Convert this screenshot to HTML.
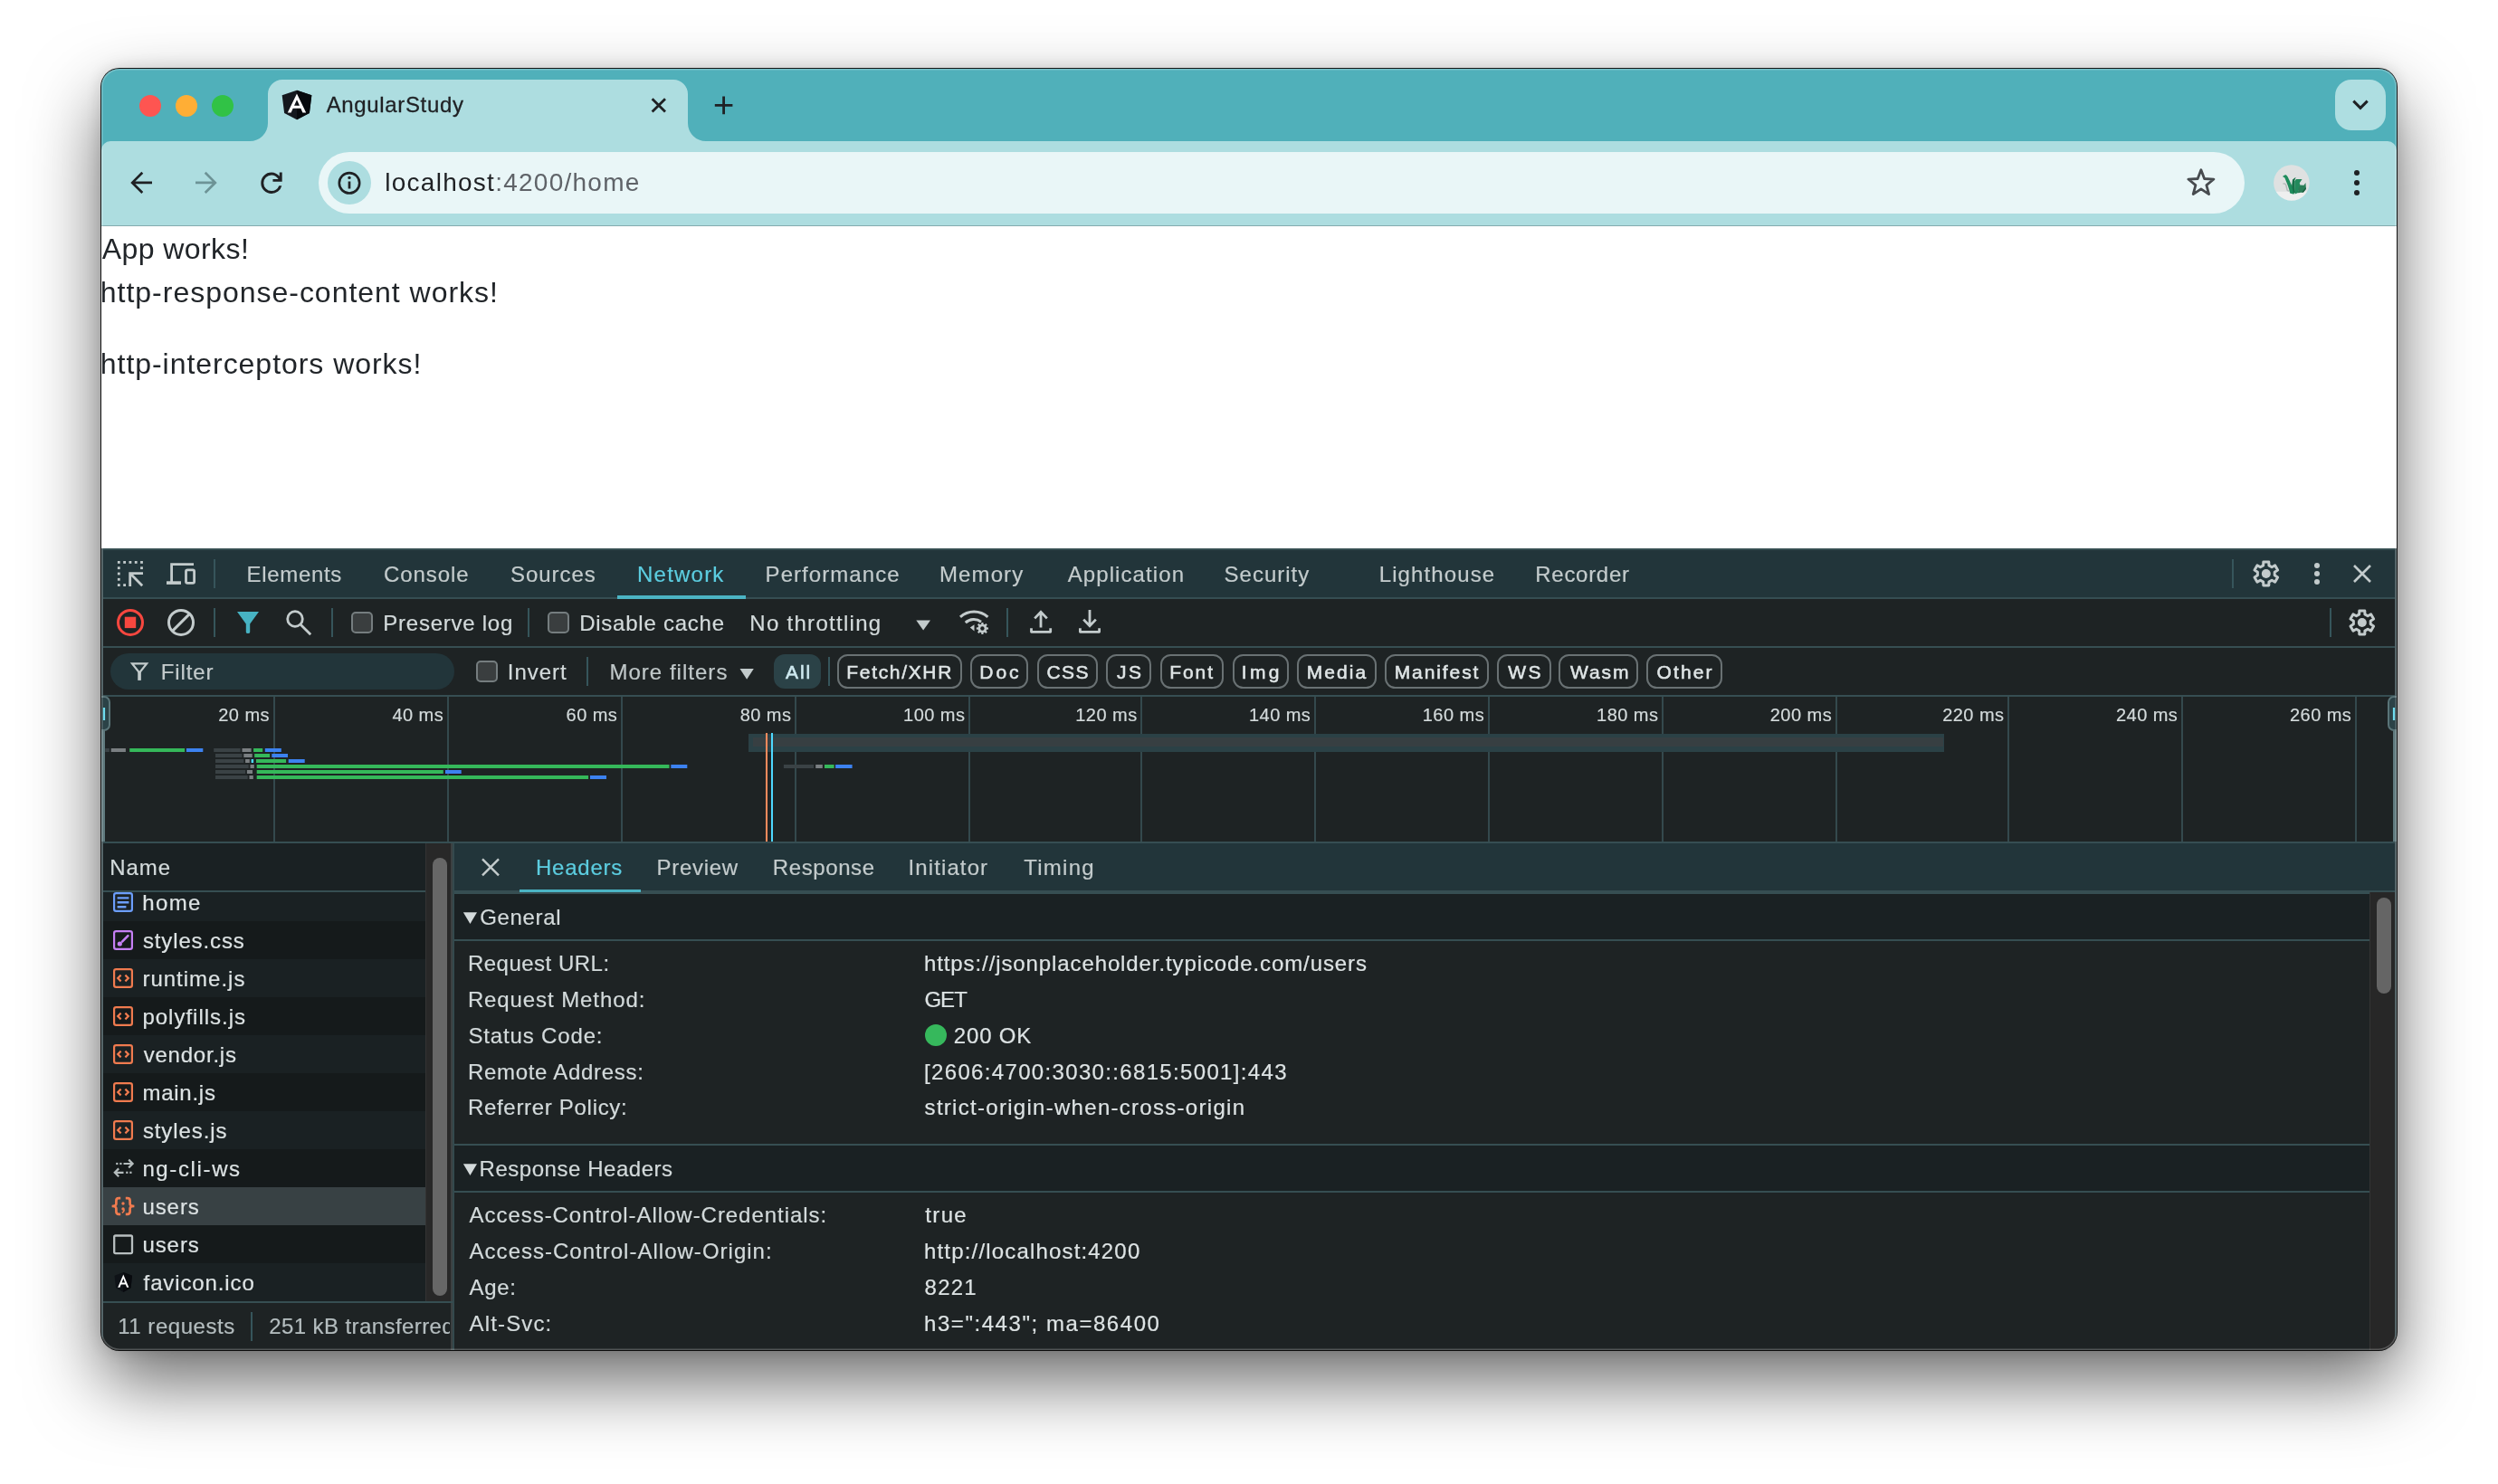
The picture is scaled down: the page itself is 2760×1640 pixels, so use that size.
<!DOCTYPE html>
<html lang="en"><head><meta charset="utf-8"><title>AngularStudy</title>
<style>
html,body{margin:0;padding:0;background:#fff}
body{width:2760px;height:1640px;position:relative;overflow:hidden;font-family:"Liberation Sans",sans-serif}
#sh{position:absolute;left:112px;top:76px;width:2536px;height:1416px;border-radius:20px;box-shadow:0 36px 80px rgba(0,0,0,.58),0 0 18px rgba(0,0,0,.14),0 0 0 1px rgba(0,0,0,.9)}
#win{position:absolute;left:112px;top:76px;width:2536px;height:1416px;border-radius:20px;overflow:hidden;background:#1e2324}
#pg{position:absolute;left:-112px;top:-76px;width:2760px;height:1640px}
#hl{position:absolute;left:0;top:0;width:2536px;height:1416px;border-radius:20px;box-shadow:inset 0 0 0 1.5px rgba(255,255,255,.22);pointer-events:none}
.b{position:absolute}
.t{position:absolute;white-space:pre;line-height:1}
#tx{position:absolute;left:0;top:0;width:2760px;height:1640px;will-change:transform}
svg{position:absolute;left:0;top:0}
</style></head><body>
<div id="sh"></div>
<div id="win"><div id="pg">
<div class="b" style="left:112px;top:76px;width:2536px;height:100px;background:#50b0ba;"></div>
<div class="b" style="left:112px;top:156px;width:2536px;height:93px;background:#addde0;border-radius:10px 10px 0 0;"></div>
<div class="b" style="left:112px;top:249px;width:2536px;height:1px;background:#84abae;"></div>
<div class="b" style="left:352px;top:168px;width:2128px;height:68px;background:#e9f6f7;border-radius:34px;"></div>
<div class="b" style="left:362px;top:178px;width:48px;height:48px;background:#addde0;border-radius:24px;"></div>
<div class="b" style="left:2580px;top:88px;width:56px;height:56px;background:#aedee1;border-radius:18px;"></div>
<div class="b" style="left:154px;top:105px;width:24px;height:24px;background:#fe5551;border-radius:12px;"></div>
<div class="b" style="left:194px;top:105px;width:24px;height:24px;background:#ffae35;border-radius:12px;"></div>
<div class="b" style="left:234px;top:105px;width:24px;height:24px;background:#31c246;border-radius:12px;"></div>
<div class="b" style="left:112px;top:250px;width:2536px;height:356px;background:#ffffff;"></div>
<div class="b" style="left:112px;top:606px;width:2536px;height:886px;background:#1e2324;"></div>
<div class="b" style="left:112px;top:606px;width:2536px;height:2px;background:#364e52;"></div>
<div class="b" style="left:112px;top:608px;width:2536px;height:52px;background:#22353a;"></div>
<div class="b" style="left:112px;top:660px;width:2536px;height:2px;background:#364e52;"></div>
<div class="b" style="left:112px;top:714px;width:2536px;height:2px;background:#364e52;"></div>
<div class="b" style="left:112px;top:768px;width:2536px;height:2px;background:#364e52;"></div>
<div class="b" style="left:682px;top:658px;width:142px;height:4px;background:#4bb4c4;"></div>
<div class="b" style="left:122px;top:722px;width:380px;height:40px;background:#22353a;border-radius:20px;"></div>
<div class="b" style="left:855px;top:723px;width:52.2px;height:38px;background:#2b4247;border-radius:12px;"></div>
<div class="b" style="left:925px;top:723px;width:134.0px;height:34px;border:2px solid #697173;border-radius:11.5px;"></div>
<div class="b" style="left:1071.7px;top:723px;width:60.7px;height:34px;border:2px solid #697173;border-radius:11.5px;"></div>
<div class="b" style="left:1145.7px;top:723px;width:63.8px;height:34px;border:2px solid #697173;border-radius:11.5px;"></div>
<div class="b" style="left:1222.3px;top:723px;width:46.2px;height:34px;border:2px solid #697173;border-radius:11.5px;"></div>
<div class="b" style="left:1281.7px;top:723px;width:66.5px;height:34px;border:2px solid #697173;border-radius:11.5px;"></div>
<div class="b" style="left:1361.9px;top:723px;width:58.5px;height:34px;border:2px solid #697173;border-radius:11.5px;"></div>
<div class="b" style="left:1433.2px;top:723px;width:84.1px;height:34px;border:2px solid #697173;border-radius:11.5px;"></div>
<div class="b" style="left:1530px;top:723px;width:111.4px;height:34px;border:2px solid #697173;border-radius:11.5px;"></div>
<div class="b" style="left:1654.3px;top:723px;width:55.4px;height:34px;border:2px solid #697173;border-radius:11.5px;"></div>
<div class="b" style="left:1722px;top:723px;width:84.0px;height:34px;border:2px solid #697173;border-radius:11.5px;"></div>
<div class="b" style="left:1819.4px;top:723px;width:79.6px;height:34px;border:2px solid #697173;border-radius:11.5px;"></div>
<div class="b" style="left:388px;top:676px;width:20px;height:20px;border:2px solid #757d7f;border-radius:5px;background:#3a3e3f;"></div>
<div class="b" style="left:605px;top:676px;width:20px;height:20px;border:2px solid #757d7f;border-radius:5px;background:#3a3e3f;"></div>
<div class="b" style="left:526px;top:730px;width:20px;height:20px;border:2px solid #757d7f;border-radius:5px;background:#3a3e3f;"></div>
<div class="b" style="left:236px;top:618px;width:2px;height:32px;background:#36555b;"></div>
<div class="b" style="left:236px;top:672px;width:2px;height:32px;background:#36555b;"></div>
<div class="b" style="left:366px;top:672px;width:2px;height:32px;background:#36555b;"></div>
<div class="b" style="left:583px;top:672px;width:2px;height:32px;background:#36555b;"></div>
<div class="b" style="left:1112px;top:672px;width:2px;height:32px;background:#36555b;"></div>
<div class="b" style="left:2466px;top:618px;width:2px;height:32px;background:#36555b;"></div>
<div class="b" style="left:2574px;top:672px;width:2px;height:32px;background:#36555b;"></div>
<div class="b" style="left:648px;top:726px;width:2px;height:32px;background:#36555b;"></div>
<div class="b" style="left:915px;top:726px;width:2px;height:32px;background:#36555b;"></div>
<div class="b" style="left:302px;top:770px;width:2px;height:160px;background:#34494d;"></div>
<div class="b" style="left:494px;top:770px;width:2px;height:160px;background:#34494d;"></div>
<div class="b" style="left:686px;top:770px;width:2px;height:160px;background:#34494d;"></div>
<div class="b" style="left:878px;top:770px;width:2px;height:160px;background:#34494d;"></div>
<div class="b" style="left:1070px;top:770px;width:2px;height:160px;background:#34494d;"></div>
<div class="b" style="left:1260px;top:770px;width:2px;height:160px;background:#34494d;"></div>
<div class="b" style="left:1452px;top:770px;width:2px;height:160px;background:#34494d;"></div>
<div class="b" style="left:1644px;top:770px;width:2px;height:160px;background:#34494d;"></div>
<div class="b" style="left:1836px;top:770px;width:2px;height:160px;background:#34494d;"></div>
<div class="b" style="left:2028px;top:770px;width:2px;height:160px;background:#34494d;"></div>
<div class="b" style="left:2218px;top:770px;width:2px;height:160px;background:#34494d;"></div>
<div class="b" style="left:2410px;top:770px;width:2px;height:160px;background:#34494d;"></div>
<div class="b" style="left:2602px;top:770px;width:2px;height:160px;background:#34494d;"></div>
<div class="b" style="left:827px;top:811px;width:1321px;height:20px;background:#2b4146;"></div>
<div class="b" style="left:831.5px;top:815px;width:1315px;height:10px;background:#373f42;"></div>
<div class="b" style="left:846px;top:810px;width:2px;height:120px;background:#ff8a5c;"></div>
<div class="b" style="left:852px;top:810px;width:2px;height:120px;background:#4dd8ff;"></div>
<div class="b" style="left:112px;top:930px;width:2536px;height:2px;background:#364e52;"></div>
<div class="b" style="left:114px;top:976px;width:356px;height:42px;background:#1a2123;"></div>
<div class="b" style="left:114px;top:1018px;width:356px;height:42px;background:#151a1b;"></div>
<div class="b" style="left:114px;top:1060px;width:356px;height:42px;background:#1a2123;"></div>
<div class="b" style="left:114px;top:1102px;width:356px;height:42px;background:#151a1b;"></div>
<div class="b" style="left:114px;top:1144px;width:356px;height:42px;background:#1a2123;"></div>
<div class="b" style="left:114px;top:1186px;width:356px;height:42px;background:#151a1b;"></div>
<div class="b" style="left:114px;top:1228px;width:356px;height:42px;background:#1a2123;"></div>
<div class="b" style="left:114px;top:1270px;width:356px;height:42px;background:#151a1b;"></div>
<div class="b" style="left:114px;top:1312px;width:356px;height:42px;background:#384144;"></div>
<div class="b" style="left:114px;top:1354px;width:356px;height:42px;background:#151a1b;"></div>
<div class="b" style="left:114px;top:1396px;width:356px;height:42px;background:#1a2123;"></div>
<div class="b" style="left:114px;top:932px;width:356px;height:52px;background:#1a2123;"></div>
<div class="b" style="left:114px;top:984px;width:356px;height:2px;background:#364e52;"></div>
<div class="b" style="left:470px;top:932px;width:28px;height:506px;background:#282828;border-left:1.5px solid #333;box-sizing:border-box;"></div>
<div class="b" style="left:478px;top:948px;width:16px;height:484px;background:#676767;border-radius:8px;"></div>
<div class="b" style="left:498px;top:932px;width:2px;height:560px;background:#3c4142;"></div>
<div class="b" style="left:500px;top:932px;width:2px;height:560px;background:#34494d;"></div>
<div class="b" style="left:112px;top:1438px;width:388px;height:2px;background:#364e52;"></div>
<div class="b" style="left:277px;top:1450px;width:2px;height:32px;background:#36555b;"></div>
<div class="b" style="left:502px;top:932px;width:2146px;height:52px;background:#22353a;"></div>
<div class="b" style="left:502px;top:984px;width:2146px;height:4px;background:#364e52;"></div>
<div class="b" style="left:574px;top:982.7px;width:134px;height:3.3px;background:#4bb4c4;"></div>
<div class="b" style="left:502px;top:988px;width:2116px;height:50px;background:#1a2123;"></div>
<div class="b" style="left:502px;top:1038px;width:2116px;height:2px;background:#364e52;"></div>
<div class="b" style="left:502px;top:1264px;width:2116px;height:2px;background:#364e52;"></div>
<div class="b" style="left:502px;top:1266px;width:2116px;height:50px;background:#1a2123;"></div>
<div class="b" style="left:502px;top:1316px;width:2116px;height:2px;background:#364e52;"></div>
<div class="b" style="left:2618px;top:986px;width:28px;height:506px;background:#272727;border-left:1px solid #343434;box-sizing:border-box;"></div>
<div class="b" style="left:2626px;top:992px;width:16px;height:106px;background:#656565;border-radius:8px;"></div>
<div class="b" style="left:1022px;top:1132px;width:24px;height:24px;background:#36b85c;border-radius:12px;"></div>
<div class="b" style="left:112px;top:606px;width:2px;height:886px;background:#3a4d51;"></div>
<div class="b" style="left:2646px;top:606px;width:2px;height:886px;background:#3a4d51;"></div>
<svg width="2760" height="1640" viewBox="0 0 2760 1640"><path d="M276,156 A20,20 0 0 0 296,136 L296,104 A16,16 0 0 1 312,88 L744,88 A16,16 0 0 1 760,104 L760,136 A20,20 0 0 0 780,156 Z" fill="#addde0"/>
<g transform="translate(306.05,95.00) scale(0.1756,0.1615)"><path d="M125 30L31.9 63.2l14.2 123.1L125 230l78.9-43.7 14.2-123.1z" fill="#14181e"/><path d="M125 30V230l78.9-43.7 14.2-123.1L125 30z" fill="#07090d"/><path d="M125 52.1L66.8 182.6h21.7l11.7-29.2h49.4l11.7 29.2H183L125 52.1zm17 83.3h-34l17-40.9 17 40.9z" fill="#fff"/></g>
<path d="M720.6,109.2 L735,123.6 M735,109.2 L720.6,123.6" stroke="#1f2124" stroke-width="2.8" fill="none"/>
<path d="M789.8,116.4 H809.4 M799.6,106.6 V126.2" stroke="#1f2124" stroke-width="2.8" fill="none"/>
<path d="M2600.3,111.6 L2608,119.3 L2615.7,111.6" stroke="#1f2124" stroke-width="3" fill="none"/>
<path d="M168,201.9 H146.5 M157.3,190.8 L146.2,201.9 L157.3,213" stroke="#1f2124" stroke-width="2.7" fill="none"/>
<path d="M216,201.9 H237.5 M226.7,190.8 L237.8,201.9 L226.7,213" stroke="#6d9396" stroke-width="2.7" fill="none"/>
<g transform="translate(300,202.3) scale(1.46) translate(-12,-12)"><path d="M12 20q-3.35 0-5.675-2.325Q4 15.35 4 12q0-3.35 2.325-5.675Q8.65 4 12 4q1.725 0 3.3.712 1.575.713 2.7 2.038V4h2v7h-7V9h4.2q-.8-1.4-2.187-2.2Q13.625 6 12 6 9.5 6 7.75 7.75T6 12q0 2.5 1.75 4.25T12 18q1.925 0 3.475-1.1T17.65 14h2.1q-.7 2.65-2.85 4.325Q14.75 20 12 20Z" fill="#1f2124"/></g>
<circle cx="386" cy="202.3" r="11.2" stroke="#1f2124" stroke-width="2.6" fill="none"/><path d="M386,200.4 V208.4" stroke="#1f2124" stroke-width="2.7"/><circle cx="386" cy="196.4" r="1.7" fill="#1f2124"/>
<polygon points="2431.90,187.80 2435.60,197.50 2445.98,198.03 2437.89,204.55 2440.60,214.57 2431.90,208.90 2423.20,214.57 2425.91,204.55 2417.82,198.03 2428.20,197.50" fill="none" stroke="#474b4f" stroke-width="2.8" stroke-linejoin="round"/>
<defs><clipPath id="avc"><circle cx="2531.9" cy="202" r="19.8"/></clipPath></defs>
<g clip-path="url(#avc)"><rect x="2510" y="180" width="44" height="32" fill="#dfe1e1"/><rect x="2510" y="211.8" width="44" height="12" fill="#eeefef"/><g transform="translate(2500,170) scale(0.043122)"><path d="M520,768 Q580,745 602,815 L628,930 L668,958" stroke="#b3b8b8" stroke-width="34" fill="none"/><path d="M510,578 L560,545 L600,542 L640,585 L690,690 L740,800 L790,900 L800,1035 L740,1020 L700,1010 L680,920 L640,800 L600,700 L565,615 Z" fill="#1e8c5c"/><path d="M745,820 L765,660 L850,600 L815,690 L835,1000 L790,1020 Z" fill="#167048"/><path d="M815,700 L860,650 L1010,650 L945,745 L962,800 L905,1000 L830,1032 Z" fill="#23895c"/><path d="M925,860 L962,800 L1055,806 L1100,740 L1112,900 L1045,988 L900,1002 Z" fill="#2b7d57"/><path d="M1000,990 L1045,988 L1112,900 L1100,860 Z" fill="#1c5c3f"/></g></g>
<circle cx="2604" cy="191" r="3" fill="#1f2124"/>
<circle cx="2604" cy="202" r="3" fill="#1f2124"/>
<circle cx="2604" cy="213" r="3" fill="#1f2124"/>
<rect x="129.9" y="620.0" width="2.8" height="2.8" fill="#c3cbcc"/>
<rect x="136.2" y="620.0" width="2.8" height="2.8" fill="#c3cbcc"/>
<rect x="129.9" y="626.3" width="2.8" height="2.8" fill="#c3cbcc"/>
<rect x="142.5" y="620.0" width="2.8" height="2.8" fill="#c3cbcc"/>
<rect x="129.9" y="632.6" width="2.8" height="2.8" fill="#c3cbcc"/>
<rect x="148.8" y="620.0" width="2.8" height="2.8" fill="#c3cbcc"/>
<rect x="129.9" y="638.9" width="2.8" height="2.8" fill="#c3cbcc"/>
<rect x="155.1" y="620.0" width="2.8" height="2.8" fill="#c3cbcc"/>
<rect x="129.9" y="645.2" width="2.8" height="2.8" fill="#c3cbcc"/>
<rect x="155.1" y="626.3" width="2.8" height="2.8" fill="#c3cbcc"/>
<rect x="136.2" y="645.2" width="2.8" height="2.8" fill="#c3cbcc"/>
<path d="M158,633.7 H143.7 V648 M144.6,634.6 L157.2,647.2" stroke="#c3cbcc" stroke-width="2.8" fill="none"/>
<path d="M214,623.7 H189.6 V643.9 M184,644.1 H200" stroke="#c3cbcc" stroke-width="2.8" fill="none"/><path d="M184,644.1 H200" stroke="#c3cbcc" stroke-width="3.4"/>
<rect x="205.5" y="629.8" width="9.1" height="14.6" rx="1.6" stroke="#c3cbcc" stroke-width="2.8" fill="none"/>
<path d="M2500.67,624.92 L2500.79,620.94 L2506.81,620.94 L2506.93,624.92 L2510.10,626.75 L2513.60,624.86 L2516.61,630.08 L2513.22,632.17 L2513.22,635.83 L2516.61,637.92 L2513.60,643.14 L2510.10,641.25 L2506.93,643.08 L2506.81,647.06 L2500.79,647.06 L2500.67,643.08 L2497.50,641.25 L2494.00,643.14 L2490.99,637.92 L2494.38,635.83 L2494.38,632.17 L2490.99,630.08 L2494.00,624.86 L2497.50,626.75Z" fill="none" stroke="#c3cbcc" stroke-width="3" stroke-linejoin="round"/><circle cx="2503.8" cy="634" r="5" fill="#c3cbcc"/>
<circle cx="2560" cy="625" r="3" fill="#c3cbcc"/>
<circle cx="2560" cy="634" r="3" fill="#c3cbcc"/>
<circle cx="2560" cy="643" r="3" fill="#c3cbcc"/>
<path d="M2601,625 L2619,643 M2619,625 L2601,643" stroke="#c3cbcc" stroke-width="2.6" fill="none"/>
<circle cx="144" cy="687.9" r="13.5" stroke="#f7473f" stroke-width="3" fill="none"/><rect x="137.8" y="681.7" width="12.4" height="12.4" fill="#f7473f"/>
<circle cx="200" cy="687.9" r="13.5" stroke="#c3cbcc" stroke-width="3" fill="none"/><path d="M190.5,697.4 L209.5,678.4" stroke="#c3cbcc" stroke-width="3"/>
<path d="M262,676 H286 L276.2,689.5 V698.5 Q276.2,700 274,700 Q271.8,700 271.8,698.5 V689.5 Z" fill="#47b3c3"/>
<circle cx="326" cy="684" r="8.3" stroke="#c3cbcc" stroke-width="2.8" fill="none"/><path d="M332.4,690.6 L343.2,701.2" stroke="#c3cbcc" stroke-width="2.8"/>
<path d="M1012.3,685.6 H1028 L1020.15,696.6 Z" fill="#c3cbcc"/>
<path d="M1061,681.8 A22.5,22.5 0 0 1 1091.4,681.8" stroke="#c3cbcc" stroke-width="3" fill="none"/><path d="M1066.8,688.2 A13.5,13.5 0 0 1 1084,687.2" stroke="#c3cbcc" stroke-width="3" fill="none"/><path d="M1076.5,690.2 L1076.5,697.5 L1071.8,693.5 Z" fill="#c3cbcc"/>
<polygon points="1090.15,693.31 1092.02,693.45 1092.02,695.55 1090.15,695.69 1089.60,697.02 1090.82,698.44 1089.34,699.92 1087.92,698.70 1086.59,699.25 1086.45,701.12 1084.35,701.12 1084.21,699.25 1082.88,698.70 1081.46,699.92 1079.98,698.44 1081.20,697.02 1080.65,695.69 1078.78,695.55 1078.78,693.45 1080.65,693.31 1081.20,691.98 1079.98,690.56 1081.46,689.08 1082.88,690.30 1084.21,689.75 1084.35,687.88 1086.45,687.88 1086.59,689.75 1087.92,690.30 1089.34,689.08 1090.82,690.56 1089.60,691.98" fill="#c3cbcc"/><circle cx="1085.4" cy="694.5" r="2.2" fill="#1e2324"/>
<path d="M1150,693.6 V676.5 M1143.2,683.4 L1150,676.3 L1156.8,683.4" stroke="#c3cbcc" stroke-width="2.8" fill="none"/><path d="M1139.5,694.2 V698.3 H1160.7 V694.2" stroke="#c3cbcc" stroke-width="2.8" fill="none" stroke-linejoin="round"/>
<path d="M1204,674 V691.4 M1197.2,684.6 L1204,691.7 L1210.8,684.6" stroke="#c3cbcc" stroke-width="2.8" fill="none"/><path d="M1193.4,694.2 V698.3 H1214.6 V694.2" stroke="#c3cbcc" stroke-width="2.8" fill="none" stroke-linejoin="round"/>
<path d="M2606.67,678.92 L2606.79,674.94 L2612.81,674.94 L2612.93,678.92 L2616.10,680.75 L2619.60,678.86 L2622.61,684.08 L2619.22,686.17 L2619.22,689.83 L2622.61,691.92 L2619.60,697.14 L2616.10,695.25 L2612.93,697.08 L2612.81,701.06 L2606.79,701.06 L2606.67,697.08 L2603.50,695.25 L2600.00,697.14 L2596.99,691.92 L2600.38,689.83 L2600.38,686.17 L2596.99,684.08 L2600.00,678.86 L2603.50,680.75Z" fill="none" stroke="#c3cbcc" stroke-width="3" stroke-linejoin="round"/><circle cx="2609.8" cy="688" r="5" fill="#c3cbcc"/>
<path d="M146,733.4 H162.1 L154.05,743.4 Z" stroke="#c3cbcc" stroke-width="2.2" fill="none" stroke-linejoin="miter"/><rect x="152.25" y="742" width="3.6" height="9.9" fill="#c3cbcc"/>
<path d="M817.5,739 H832.8 L825.15,750.8 Z" fill="#c3cbcc"/>
<rect x="112" y="770" width="4" height="160" fill="#5f797d"/><rect x="2644" y="770" width="4" height="160" fill="#5f797d"/>
<rect x="103" y="770" width="18" height="37" rx="6" fill="#2b4247" stroke="#5a7478" stroke-width="2"/><rect x="113.9" y="782" width="2.2" height="14" fill="#6fddf0"/>
<rect x="2639" y="770" width="18" height="37" rx="6" fill="#2b4247" stroke="#5a7478" stroke-width="2"/><rect x="2643.9" y="782" width="2.2" height="14" fill="#6fddf0"/>
<rect x="116.2" y="827" width="4.7" height="4" fill="#3a4245"/>
<rect x="122.7" y="827" width="16.2" height="4" fill="#7a7f82"/>
<rect x="143.2" y="827" width="60.9" height="4" fill="#35b85a"/>
<rect x="205.9" y="827" width="18.4" height="4" fill="#3c82f0"/>
<rect x="236.2" y="827" width="29.5" height="4" fill="#3a4245"/>
<rect x="267.5" y="827" width="10.1" height="4" fill="#7a7f82"/>
<rect x="280.1" y="827" width="10.1" height="4" fill="#35b85a"/>
<rect x="292.8" y="827" width="18.0" height="4" fill="#3c82f0"/>
<rect x="238.0" y="833" width="29.5" height="4" fill="#3a4245"/>
<rect x="269.3" y="833" width="9.4" height="4" fill="#7a7f82"/>
<rect x="281.2" y="833" width="16.9" height="4" fill="#35b85a"/>
<rect x="300.3" y="833" width="17.7" height="4" fill="#3c82f0"/>
<rect x="238.0" y="839" width="31.3" height="4" fill="#3a4245"/>
<rect x="271.1" y="839" width="4.7" height="4" fill="#7a7f82"/>
<rect x="277.6" y="839" width="2.5" height="4" fill="#4dd8ff"/>
<rect x="283.0" y="839" width="33.1" height="4" fill="#35b85a"/>
<rect x="318.7" y="839" width="18.0" height="4" fill="#3c82f0"/>
<rect x="238.0" y="845" width="36.7" height="4" fill="#3a4245"/>
<rect x="276.5" y="845" width="4.3" height="4" fill="#7a7f82"/>
<rect x="283.7" y="845" width="455.8" height="4" fill="#35b85a"/>
<rect x="741.3" y="845" width="18.0" height="4" fill="#3c82f0"/>
<rect x="238.0" y="851" width="33.1" height="4" fill="#3a4245"/>
<rect x="272.9" y="851" width="6.1" height="4" fill="#7a7f82"/>
<rect x="283.7" y="851" width="206.1" height="4" fill="#35b85a"/>
<rect x="492.0" y="851" width="17.7" height="4" fill="#3c82f0"/>
<rect x="238.0" y="857" width="35.7" height="4" fill="#3a4245"/>
<rect x="275.5" y="857" width="4.3" height="4" fill="#7a7f82"/>
<rect x="283.7" y="857" width="366.4" height="4" fill="#35b85a"/>
<rect x="652.0" y="857" width="18.0" height="4" fill="#3c82f0"/>
<rect x="865.9" y="845" width="33.1" height="4" fill="#3a4245"/>
<rect x="901.2" y="845" width="7.6" height="4" fill="#7a7f82"/>
<rect x="911" y="845" width="10.6" height="4" fill="#35b85a"/>
<rect x="923.1" y="845" width="18.5" height="4" fill="#3c82f0"/>
<rect x="126.1" y="987.1" width="19.8" height="19.8" rx="2.2" stroke="#6c9efb" stroke-width="2.2" fill="none"/><path d="M129.6,992.4 H142.4 M129.6,997.3 H142.4 M129.6,1002.2 H139.4" stroke="#6c9efb" stroke-width="2.4"/>
<rect x="126.1" y="1029.1" width="19.8" height="19.8" rx="2.2" stroke="#c680f5" stroke-width="2.2" fill="none"/><path d="M141.4,1034.2 L135,1040.6" stroke="#c680f5" stroke-width="2.6" stroke-linecap="round"/><circle cx="132.3" cy="1043" r="2.6" fill="#c680f5"/>
<rect x="126.1" y="1071.1" width="19.8" height="19.8" rx="2.2" stroke="#f07b4f" stroke-width="2.2" fill="none"/><path d="M133.6,1077.6 L130.2,1081 L133.6,1084.4 M138.4,1077.6 L141.8,1081 L138.4,1084.4" stroke="#f07b4f" stroke-width="2.2" fill="none"/>
<rect x="126.1" y="1113.1" width="19.8" height="19.8" rx="2.2" stroke="#f07b4f" stroke-width="2.2" fill="none"/><path d="M133.6,1119.6 L130.2,1123 L133.6,1126.4 M138.4,1119.6 L141.8,1123 L138.4,1126.4" stroke="#f07b4f" stroke-width="2.2" fill="none"/>
<rect x="126.1" y="1155.1" width="19.8" height="19.8" rx="2.2" stroke="#f07b4f" stroke-width="2.2" fill="none"/><path d="M133.6,1161.6 L130.2,1165 L133.6,1168.4 M138.4,1161.6 L141.8,1165 L138.4,1168.4" stroke="#f07b4f" stroke-width="2.2" fill="none"/>
<rect x="126.1" y="1197.1" width="19.8" height="19.8" rx="2.2" stroke="#f07b4f" stroke-width="2.2" fill="none"/><path d="M133.6,1203.6 L130.2,1207 L133.6,1210.4 M138.4,1203.6 L141.8,1207 L138.4,1210.4" stroke="#f07b4f" stroke-width="2.2" fill="none"/>
<rect x="126.1" y="1239.1" width="19.8" height="19.8" rx="2.2" stroke="#f07b4f" stroke-width="2.2" fill="none"/><path d="M133.6,1245.6 L130.2,1249 L133.6,1252.4 M138.4,1245.6 L141.8,1249 L138.4,1252.4" stroke="#f07b4f" stroke-width="2.2" fill="none"/>
<path d="M136.5,1286 H146 M142.2,1281.6 L146.6,1286 L142.2,1290.4" stroke="#b4bcbd" stroke-width="2.2" fill="none"/><rect x="128.2" y="1284.9" width="2.2" height="2.2" fill="#b4bcbd"/><rect x="132.3" y="1284.9" width="2.2" height="2.2" fill="#b4bcbd"/>
<path d="M136.5,1295.8 H127.4 M131.2,1291.4 L126.8,1295.8 L131.2,1300.2" stroke="#b4bcbd" stroke-width="2.2" fill="none"/><rect x="139.2" y="1294.7" width="2.2" height="2.2" fill="#b4bcbd"/><rect x="143.3" y="1294.7" width="2.2" height="2.2" fill="#b4bcbd"/>
<path d="M133.2,1324.2 H131.2 Q128.4,1324.2 128.4,1327 V1330.2 Q128.4,1333 123.6,1333 Q128.4,1333 128.4,1335.8 V1339 Q128.4,1341.8 131.2,1341.8 H133.2" stroke="#f07b4f" stroke-width="2.7" fill="none"/>
<path d="M138.8,1324.2 H140.8 Q143.6,1324.2 143.6,1327 V1330.2 Q143.6,1333 148.4,1333 Q143.6,1333 143.6,1335.8 V1339 Q143.6,1341.8 140.8,1341.8 H138.8" stroke="#f07b4f" stroke-width="2.7" fill="none"/>
<circle cx="136" cy="1330" r="1.7" fill="#f07b4f"/><circle cx="136" cy="1336" r="1.7" fill="#f07b4f"/><path d="M137.2,1336.4 q0,2.8 -2.4,3.8" stroke="#f07b4f" stroke-width="1.5" fill="none"/>
<rect x="126.2" y="1365.5" width="19.8" height="19.6" rx="1.5" stroke="#b8bfc0" stroke-width="2.3" fill="none"/>
<g transform="translate(123.21,1402.70) scale(0.1047,0.1100)"><path d="M125 30L31.9 63.2l14.2 123.1L125 230l78.9-43.7 14.2-123.1z" fill="#0e1217"/><path d="M125 30V230l78.9-43.7 14.2-123.1L125 30z" fill="#080a0e"/><path d="M125 52.1L66.8 182.6h21.7l11.7-29.2h49.4l11.7 29.2H183L125 52.1zm17 83.3h-34l17-40.9 17 40.9z" fill="#fff"/></g>
<path d="M533,949.4 L551,967.4 M551,949.4 L533,967.4" stroke="#c3cbcc" stroke-width="2.4" fill="none"/>
<path d="M511.9,1008.2 H527 L519.45,1021 Z" fill="#d3dadb"/>
<path d="M511.9,1286.3 H527 L519.45,1299.1 Z" fill="#d3dadb"/></svg>
<div id="tx">
<div class="t" style="top:103.8px;font-size:24px;color:#1f2124;letter-spacing:0.647px;left:360.7px;-webkit-text-stroke:0.3px #1f2124;">AngularStudy</div>
<div class="t" style="left:425.3px;top:188.2px;font-size:28px;color:#1f2124;letter-spacing:1.256px">localhost<span style="color:#5f6368">:4200/home</span></div>
<div class="t" style="top:258.5px;font-size:32px;color:#212529;letter-spacing:0.425px;left:112.7px;">App works!</div>
<div class="t" style="top:306.6px;font-size:32px;color:#212529;letter-spacing:0.983px;left:110.8px;">http-response-content works!</div>
<div class="t" style="top:386.3px;font-size:32px;color:#212529;letter-spacing:0.958px;left:110.8px;">http-interceptors works!</div>
<div class="t" style="top:622.5px;font-size:24px;color:#c3cbcc;letter-spacing:0.686px;left:272.5px;-webkit-text-stroke:0.2px #c3cbcc;">Elements</div>
<div class="t" style="top:622.5px;font-size:24px;color:#c3cbcc;letter-spacing:0.911px;left:424.0px;-webkit-text-stroke:0.2px #c3cbcc;">Console</div>
<div class="t" style="top:622.5px;font-size:24px;color:#c3cbcc;letter-spacing:0.924px;left:564.1px;-webkit-text-stroke:0.2px #c3cbcc;">Sources</div>
<div class="t" style="top:622.5px;font-size:24px;color:#5ccde0;letter-spacing:1.224px;left:704.0px;-webkit-text-stroke:0.2px #5ccde0;">Network</div>
<div class="t" style="top:622.5px;font-size:24px;color:#c3cbcc;letter-spacing:1.055px;left:845.6px;-webkit-text-stroke:0.2px #c3cbcc;">Performance</div>
<div class="t" style="top:622.5px;font-size:24px;color:#c3cbcc;letter-spacing:1.099px;left:1038.0px;-webkit-text-stroke:0.2px #c3cbcc;">Memory</div>
<div class="t" style="top:622.5px;font-size:24px;color:#c3cbcc;letter-spacing:1.089px;left:1179.7px;-webkit-text-stroke:0.2px #c3cbcc;">Application</div>
<div class="t" style="top:622.5px;font-size:24px;color:#c3cbcc;letter-spacing:0.991px;left:1352.6px;-webkit-text-stroke:0.2px #c3cbcc;">Security</div>
<div class="t" style="top:622.5px;font-size:24px;color:#c3cbcc;letter-spacing:1.116px;left:1523.7px;-webkit-text-stroke:0.2px #c3cbcc;">Lighthouse</div>
<div class="t" style="top:622.5px;font-size:24px;color:#c3cbcc;letter-spacing:0.708px;left:1696.3px;-webkit-text-stroke:0.2px #c3cbcc;">Recorder</div>
<div class="t" style="top:676.5px;font-size:24px;color:#d3dadb;letter-spacing:0.749px;left:423.3px;-webkit-text-stroke:0.2px #d3dadb;">Preserve log</div>
<div class="t" style="top:676.5px;font-size:24px;color:#d3dadb;letter-spacing:0.756px;left:640.2px;-webkit-text-stroke:0.2px #d3dadb;">Disable cache</div>
<div class="t" style="top:676.5px;font-size:24px;color:#d3dadb;letter-spacing:1.288px;left:828.3px;-webkit-text-stroke:0.2px #d3dadb;">No throttling</div>
<div class="t" style="top:730.8px;font-size:24px;color:#c3cbcc;letter-spacing:0.875px;left:177.7px;-webkit-text-stroke:0.2px #c3cbcc;">Filter</div>
<div class="t" style="top:730.8px;font-size:24px;color:#d3dadb;letter-spacing:0.987px;left:560.8px;-webkit-text-stroke:0.2px #d3dadb;">Invert</div>
<div class="t" style="top:730.8px;font-size:24px;color:#c0c8c9;letter-spacing:1.028px;left:673.4px;-webkit-text-stroke:0.2px #c0c8c9;">More filters</div>
<div class="t" style="top:731.9px;font-size:21px;color:#cfeaf0;letter-spacing:1.887px;left:868.0px;-webkit-text-stroke:0.55px #cfeaf0;">All</div>
<div class="t" style="top:731.9px;font-size:21px;color:#dfe5e6;letter-spacing:1.671px;left:935.3px;-webkit-text-stroke:0.55px #dfe5e6;">Fetch/XHR</div>
<div class="t" style="top:731.9px;font-size:21px;color:#dfe5e6;letter-spacing:2.917px;left:1082.3px;-webkit-text-stroke:0.55px #dfe5e6;">Doc</div>
<div class="t" style="top:731.9px;font-size:21px;color:#dfe5e6;letter-spacing:1.445px;left:1156.5px;-webkit-text-stroke:0.55px #dfe5e6;">CSS</div>
<div class="t" style="top:731.9px;font-size:21px;color:#dfe5e6;letter-spacing:2.494px;left:1234.0px;-webkit-text-stroke:0.55px #dfe5e6;">JS</div>
<div class="t" style="top:731.9px;font-size:21px;color:#dfe5e6;letter-spacing:1.907px;left:1292.3px;-webkit-text-stroke:0.55px #dfe5e6;">Font</div>
<div class="t" style="top:731.9px;font-size:21px;color:#dfe5e6;letter-spacing:3.335px;left:1371.8px;-webkit-text-stroke:0.55px #dfe5e6;">Img</div>
<div class="t" style="top:731.9px;font-size:21px;color:#dfe5e6;letter-spacing:2.070px;left:1443.8px;-webkit-text-stroke:0.55px #dfe5e6;">Media</div>
<div class="t" style="top:731.9px;font-size:21px;color:#dfe5e6;letter-spacing:1.903px;left:1540.7px;-webkit-text-stroke:0.55px #dfe5e6;">Manifest</div>
<div class="t" style="top:731.9px;font-size:21px;color:#dfe5e6;letter-spacing:2.341px;left:1666.3px;-webkit-text-stroke:0.55px #dfe5e6;">WS</div>
<div class="t" style="top:731.9px;font-size:21px;color:#dfe5e6;letter-spacing:1.937px;left:1735.0px;-webkit-text-stroke:0.55px #dfe5e6;">Wasm</div>
<div class="t" style="top:731.9px;font-size:21px;color:#dfe5e6;letter-spacing:2.099px;left:1830.6px;-webkit-text-stroke:0.55px #dfe5e6;">Other</div>
<div class="t" style="top:780.1px;font-size:20px;color:#d3dadb;letter-spacing:0.450px;left:241.3px;-webkit-text-stroke:0.2px #d3dadb;">20 ms</div>
<div class="t" style="top:780.1px;font-size:20px;color:#d3dadb;letter-spacing:0.450px;left:433.4px;-webkit-text-stroke:0.2px #d3dadb;">40 ms</div>
<div class="t" style="top:780.1px;font-size:20px;color:#d3dadb;letter-spacing:0.450px;left:625.6px;-webkit-text-stroke:0.2px #d3dadb;">60 ms</div>
<div class="t" style="top:780.1px;font-size:20px;color:#d3dadb;letter-spacing:0.450px;left:817.7px;-webkit-text-stroke:0.2px #d3dadb;">80 ms</div>
<div class="t" style="top:780.1px;font-size:20px;color:#d3dadb;letter-spacing:0.450px;left:998.1px;-webkit-text-stroke:0.2px #d3dadb;">100 ms</div>
<div class="t" style="top:780.1px;font-size:20px;color:#d3dadb;letter-spacing:0.450px;left:1188.3px;-webkit-text-stroke:0.2px #d3dadb;">120 ms</div>
<div class="t" style="top:780.1px;font-size:20px;color:#d3dadb;letter-spacing:0.450px;left:1380.0px;-webkit-text-stroke:0.2px #d3dadb;">140 ms</div>
<div class="t" style="top:780.1px;font-size:20px;color:#d3dadb;letter-spacing:0.450px;left:1571.8px;-webkit-text-stroke:0.2px #d3dadb;">160 ms</div>
<div class="t" style="top:780.1px;font-size:20px;color:#d3dadb;letter-spacing:0.450px;left:1764.1px;-webkit-text-stroke:0.2px #d3dadb;">180 ms</div>
<div class="t" style="top:780.1px;font-size:20px;color:#d3dadb;letter-spacing:0.450px;left:1955.8px;-webkit-text-stroke:0.2px #d3dadb;">200 ms</div>
<div class="t" style="top:780.1px;font-size:20px;color:#d3dadb;letter-spacing:0.450px;left:2146.2px;-webkit-text-stroke:0.2px #d3dadb;">220 ms</div>
<div class="t" style="top:780.1px;font-size:20px;color:#d3dadb;letter-spacing:0.450px;left:2338.0px;-webkit-text-stroke:0.2px #d3dadb;">240 ms</div>
<div class="t" style="top:780.1px;font-size:20px;color:#d3dadb;letter-spacing:0.450px;left:2530.0px;-webkit-text-stroke:0.2px #d3dadb;">260 ms</div>
<div class="t" style="top:946.9px;font-size:24px;color:#d3dadb;letter-spacing:0.933px;left:121.2px;-webkit-text-stroke:0.2px #d3dadb;">Name</div>
<div class="t" style="top:985.7px;font-size:24px;color:#dde3e4;letter-spacing:1.325px;left:157.3px;-webkit-text-stroke:0.2px #dde3e4;">home</div>
<div class="t" style="top:1027.7px;font-size:24px;color:#dde3e4;letter-spacing:0.872px;left:157.9px;-webkit-text-stroke:0.2px #dde3e4;">styles.css</div>
<div class="t" style="top:1069.7px;font-size:24px;color:#dde3e4;letter-spacing:1.002px;left:157.4px;-webkit-text-stroke:0.2px #dde3e4;">runtime.js</div>
<div class="t" style="top:1111.7px;font-size:24px;color:#dde3e4;letter-spacing:0.999px;left:157.4px;-webkit-text-stroke:0.2px #dde3e4;">polyfills.js</div>
<div class="t" style="top:1153.8px;font-size:24px;color:#dde3e4;letter-spacing:0.772px;left:158.7px;-webkit-text-stroke:0.2px #dde3e4;">vendor.js</div>
<div class="t" style="top:1195.8px;font-size:24px;color:#dde3e4;letter-spacing:0.755px;left:157.4px;-webkit-text-stroke:0.2px #dde3e4;">main.js</div>
<div class="t" style="top:1237.8px;font-size:24px;color:#dde3e4;letter-spacing:0.905px;left:157.9px;-webkit-text-stroke:0.2px #dde3e4;">styles.js</div>
<div class="t" style="top:1279.8px;font-size:24px;color:#dde3e4;letter-spacing:1.629px;left:157.4px;-webkit-text-stroke:0.2px #dde3e4;">ng-cli-ws</div>
<div class="t" style="top:1321.8px;font-size:24px;color:#dde3e4;letter-spacing:0.943px;left:157.4px;-webkit-text-stroke:0.2px #dde3e4;">users</div>
<div class="t" style="top:1363.9px;font-size:24px;color:#dde3e4;letter-spacing:0.943px;left:157.4px;-webkit-text-stroke:0.2px #dde3e4;">users</div>
<div class="t" style="top:1405.9px;font-size:24px;color:#dde3e4;letter-spacing:0.875px;left:158.6px;-webkit-text-stroke:0.2px #dde3e4;">favicon.ico</div>
<div class="t" style="top:1453.7px;font-size:24px;color:#b4bdbf;letter-spacing:0.533px;left:130.2px;-webkit-text-stroke:0.2px #b4bdbf;">11 requests</div>
<div class="t" style="top:1453.7px;font-size:24px;color:#b4bdbf;letter-spacing:0.416px;left:297.2px;-webkit-text-stroke:0.2px #b4bdbf;width:199.8px;overflow:hidden;">251 kB transferred</div>
<div class="t" style="top:946.9px;font-size:24px;color:#5ccde0;letter-spacing:0.767px;left:592.0px;-webkit-text-stroke:0.2px #5ccde0;">Headers</div>
<div class="t" style="top:946.9px;font-size:24px;color:#c3cbcc;letter-spacing:0.692px;left:725.6px;-webkit-text-stroke:0.2px #c3cbcc;">Preview</div>
<div class="t" style="top:946.9px;font-size:24px;color:#c3cbcc;letter-spacing:0.600px;left:853.8px;-webkit-text-stroke:0.2px #c3cbcc;">Response</div>
<div class="t" style="top:946.9px;font-size:24px;color:#c3cbcc;letter-spacing:1.113px;left:1003.5px;-webkit-text-stroke:0.2px #c3cbcc;">Initiator</div>
<div class="t" style="top:946.9px;font-size:24px;color:#c3cbcc;letter-spacing:1.269px;left:1131.2px;-webkit-text-stroke:0.2px #c3cbcc;">Timing</div>
<div class="t" style="top:1001.6px;font-size:24px;color:#d3dadb;letter-spacing:0.657px;left:530.2px;-webkit-text-stroke:0.2px #d3dadb;">General</div>
<div class="t" style="top:1279.7px;font-size:24px;color:#d3dadb;letter-spacing:0.543px;left:529.5px;-webkit-text-stroke:0.2px #d3dadb;">Response Headers</div>
<div class="t" style="top:1052.9px;font-size:24px;color:#d3dadb;letter-spacing:0.493px;left:516.9px;-webkit-text-stroke:0.2px #d3dadb;">Request URL:</div>
<div class="t" style="top:1093.0px;font-size:24px;color:#d3dadb;letter-spacing:0.902px;left:516.9px;-webkit-text-stroke:0.2px #d3dadb;">Request Method:</div>
<div class="t" style="top:1132.8px;font-size:24px;color:#d3dadb;letter-spacing:0.843px;left:517.5px;-webkit-text-stroke:0.2px #d3dadb;">Status Code:</div>
<div class="t" style="top:1172.5px;font-size:24px;color:#d3dadb;letter-spacing:0.705px;left:516.9px;-webkit-text-stroke:0.2px #d3dadb;">Remote Address:</div>
<div class="t" style="top:1212.4px;font-size:24px;color:#d3dadb;letter-spacing:0.698px;left:516.9px;-webkit-text-stroke:0.2px #d3dadb;">Referrer Policy:</div>
<div class="t" style="top:1330.9px;font-size:24px;color:#d3dadb;letter-spacing:0.950px;left:518.6px;-webkit-text-stroke:0.2px #d3dadb;">Access-Control-Allow-Credentials:</div>
<div class="t" style="top:1370.7px;font-size:24px;color:#d3dadb;letter-spacing:1.011px;left:518.6px;-webkit-text-stroke:0.2px #d3dadb;">Access-Control-Allow-Origin:</div>
<div class="t" style="top:1410.5px;font-size:24px;color:#d3dadb;letter-spacing:0.677px;left:518.6px;-webkit-text-stroke:0.2px #d3dadb;">Age:</div>
<div class="t" style="top:1450.6px;font-size:24px;color:#d3dadb;letter-spacing:1.142px;left:518.6px;-webkit-text-stroke:0.2px #d3dadb;">Alt-Svc:</div>
<div class="t" style="top:1052.9px;font-size:24px;color:#dde3e4;letter-spacing:0.894px;left:1021.0px;-webkit-text-stroke:0.2px #dde3e4;">https://jsonplaceholder.typicode.com/users</div>
<div class="t" style="top:1093.0px;font-size:24px;color:#dde3e4;letter-spacing:-0.942px;left:1021.4px;-webkit-text-stroke:0.2px #dde3e4;">GET</div>
<div class="t" style="top:1132.8px;font-size:24px;color:#dde3e4;letter-spacing:0.831px;left:1053.8px;-webkit-text-stroke:0.2px #dde3e4;">200 OK</div>
<div class="t" style="top:1172.5px;font-size:24px;color:#dde3e4;letter-spacing:1.340px;left:1021.0px;-webkit-text-stroke:0.2px #dde3e4;">[2606:4700:3030::6815:5001]:443</div>
<div class="t" style="top:1212.4px;font-size:24px;color:#dde3e4;letter-spacing:1.289px;left:1021.6px;-webkit-text-stroke:0.2px #dde3e4;">strict-origin-when-cross-origin</div>
<div class="t" style="top:1330.9px;font-size:24px;color:#dde3e4;letter-spacing:1.339px;left:1022.3px;-webkit-text-stroke:0.2px #dde3e4;">true</div>
<div class="t" style="top:1370.7px;font-size:24px;color:#dde3e4;letter-spacing:1.171px;left:1021.0px;-webkit-text-stroke:0.2px #dde3e4;">http://localhost:4200</div>
<div class="t" style="top:1410.5px;font-size:24px;color:#dde3e4;letter-spacing:1.219px;left:1021.6px;-webkit-text-stroke:0.2px #dde3e4;">8221</div>
<div class="t" style="top:1450.6px;font-size:24px;color:#dde3e4;letter-spacing:1.557px;left:1021.0px;-webkit-text-stroke:0.2px #dde3e4;">h3=&quot;:443&quot;; ma=86400</div>
</div>
</div><div id="hl"></div></div>
</body></html>
